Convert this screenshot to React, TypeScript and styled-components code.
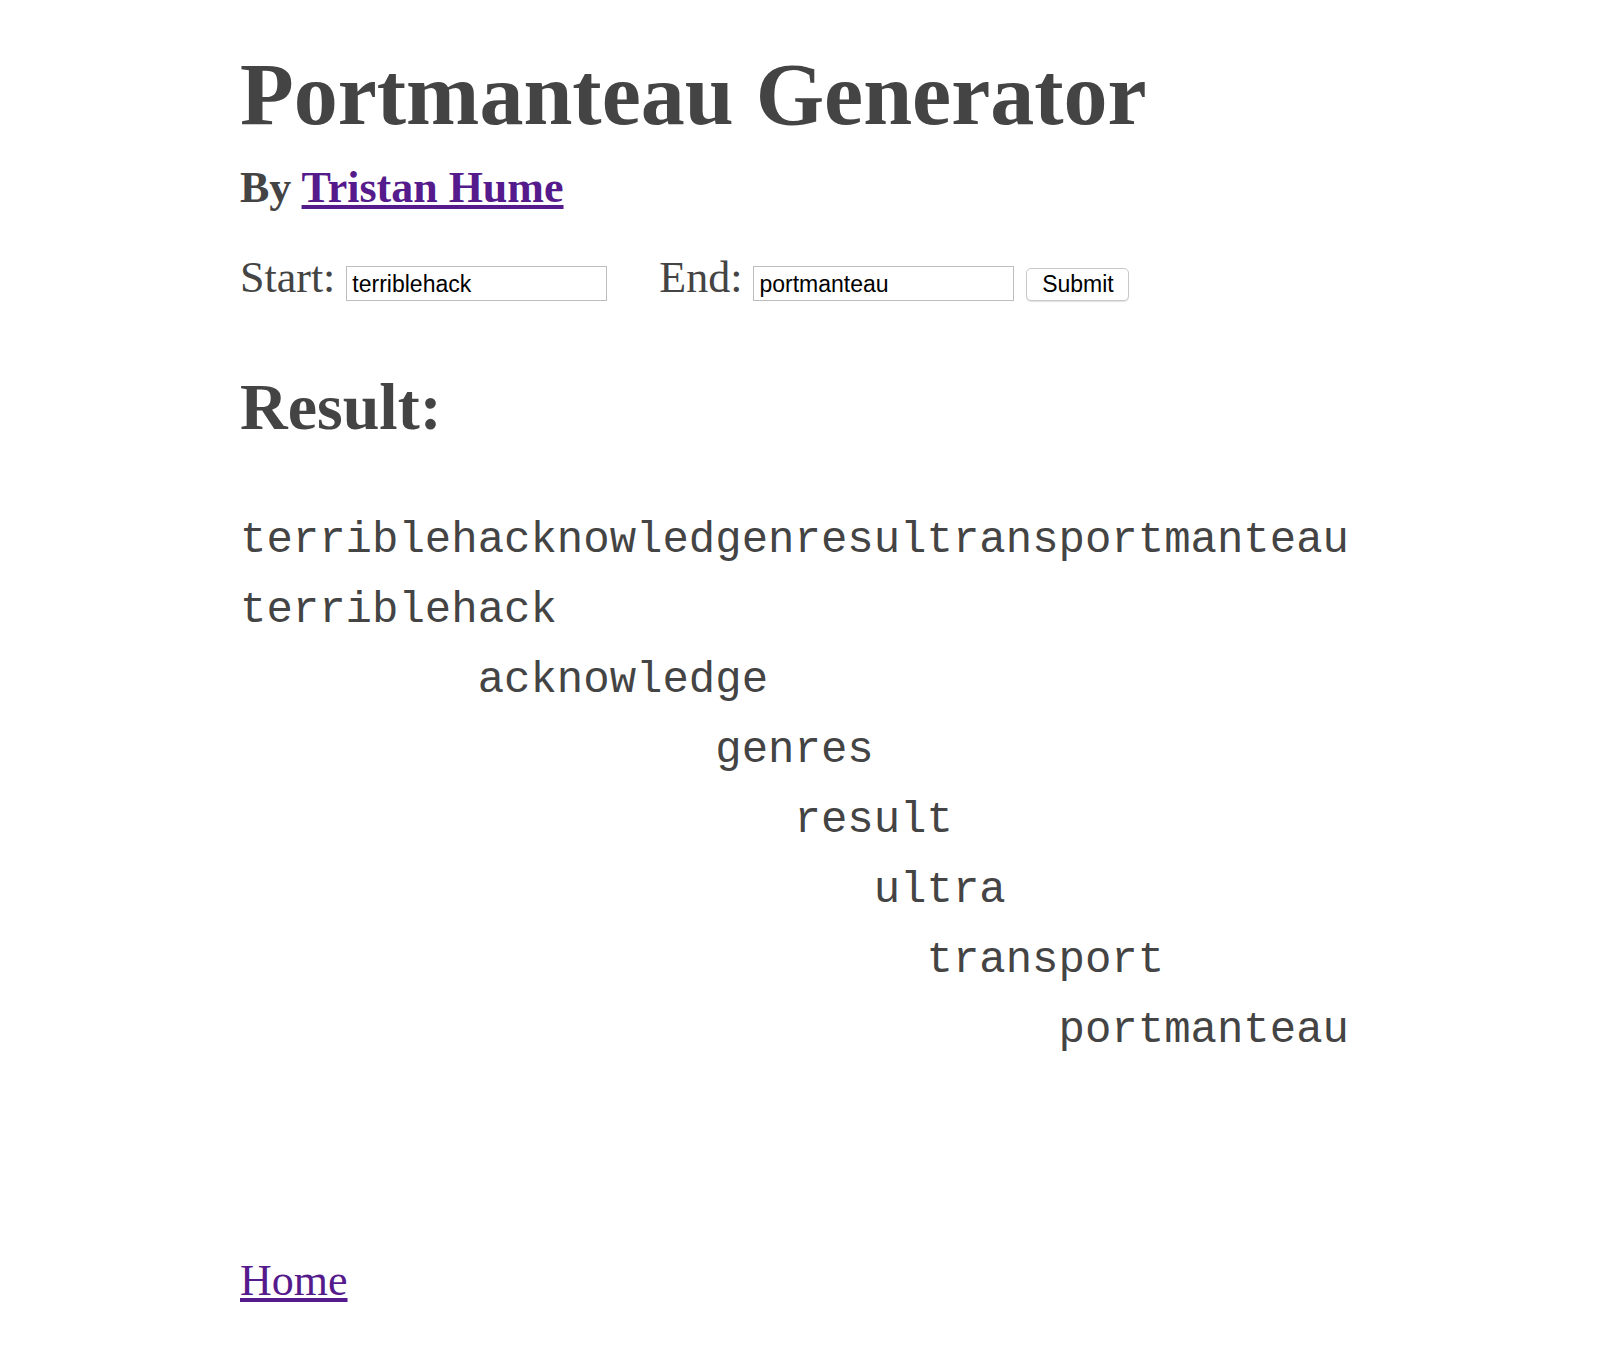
import React, { FC, useState } from 'react';
import styled, { createGlobalStyle } from 'styled-components';

const GlobalStyle = createGlobalStyle`
  body {
    margin: 0;
    background: #fff;
    font-family: "Liberation Serif", "Times New Roman", serif;
    color: #444;
  }
`;

const Page = styled.div`
  padding: 45px 240px 60px;
`;

const Title = styled.h1`
  margin: 0;
  font-size: 88px;
  line-height: 100px;
  font-weight: bold;
`;

const Byline = styled.h2`
  margin: 18px 0 0;
  font-size: 44px;
  line-height: 50px;
  font-weight: bold;

  a {
    color: #551a8b;
  }
`;

const Form = styled.form`
  display: flex;
  align-items: baseline;
  margin-top: 40px;
`;

const Label = styled.label<{ spaced?: boolean }>`
  font-size: 44px;
  line-height: 50px;
  margin-left: ${({ spaced }) => (spaced ? '52px' : '0')};
  margin-right: 11px;
`;

const Input = styled.input`
  box-sizing: border-box;
  width: 261px;
  height: 35px;
  padding: 2px 5px 0;
  border: 1px solid #bdbdbd;
  font-family: "Liberation Sans", Arial, sans-serif;
  font-size: 23px;
  color: #000;
  outline: none;
`;

const Button = styled.button`
  box-sizing: border-box;
  width: 103px;
  height: 33px;
  margin-left: 12px;
  border: 1px solid #c9c9c9;
  border-radius: 5px;
  background: #fff;
  box-shadow: 0 1px 1px rgba(0, 0, 0, 0.12);
  font-family: "Liberation Sans", Arial, sans-serif;
  font-size: 23px;
  color: #000;
  padding: 0;
`;

const ResultTitle = styled.h2`
  margin: 66px 0 0;
  font-size: 66px;
  line-height: 76px;
  font-weight: bold;
`;

const Chain = styled.div`
  margin-top: 60px;
  font-family: "Liberation Mono", "Courier New", monospace;
  font-size: 44px;
`;

const ChainLine = styled.div<{ indent: number }>`
  height: 70px;
  line-height: 70px;
  padding-left: ${({ indent }) => indent}ch;
  white-space: pre;
`;

const Footer = styled.div`
  margin-top: 191px;
  font-size: 44px;
  line-height: 50px;

  a {
    color: #551a8b;
  }
`;

const pieces: [string, number][] = [
  ['terriblehacknowledgenresultransportmanteau', 0],
  ['terriblehack', 0],
  ['acknowledge', 9],
  ['genres', 18],
  ['result', 21],
  ['ultra', 24],
  ['transport', 26],
  ['portmanteau', 31],
];

const App: FC = () => {
  const [start, setStart] = useState('terriblehack');
  const [end, setEnd] = useState('portmanteau');
  return (
    <>
      <GlobalStyle />
      <Page>
        <Title>Portmanteau Generator</Title>
        <Byline>
          By <a href="#">Tristan Hume</a>
        </Byline>
        <Form onSubmit={(e) => e.preventDefault()}>
          <Label>Start:</Label>
          <Input value={start} onChange={(e) => setStart(e.target.value)} />
          <Label spaced>End:</Label>
          <Input value={end} onChange={(e) => setEnd(e.target.value)} />
          <Button type="submit">Submit</Button>
        </Form>
        <ResultTitle>Result:</ResultTitle>
        <Chain>
          {pieces.map(([word, indent], i) => (
            <ChainLine key={i} indent={indent}>
              {word}
            </ChainLine>
          ))}
        </Chain>
        <Footer>
          <a href="#">Home</a>
        </Footer>
      </Page>
    </>
  );
};

export default App;
